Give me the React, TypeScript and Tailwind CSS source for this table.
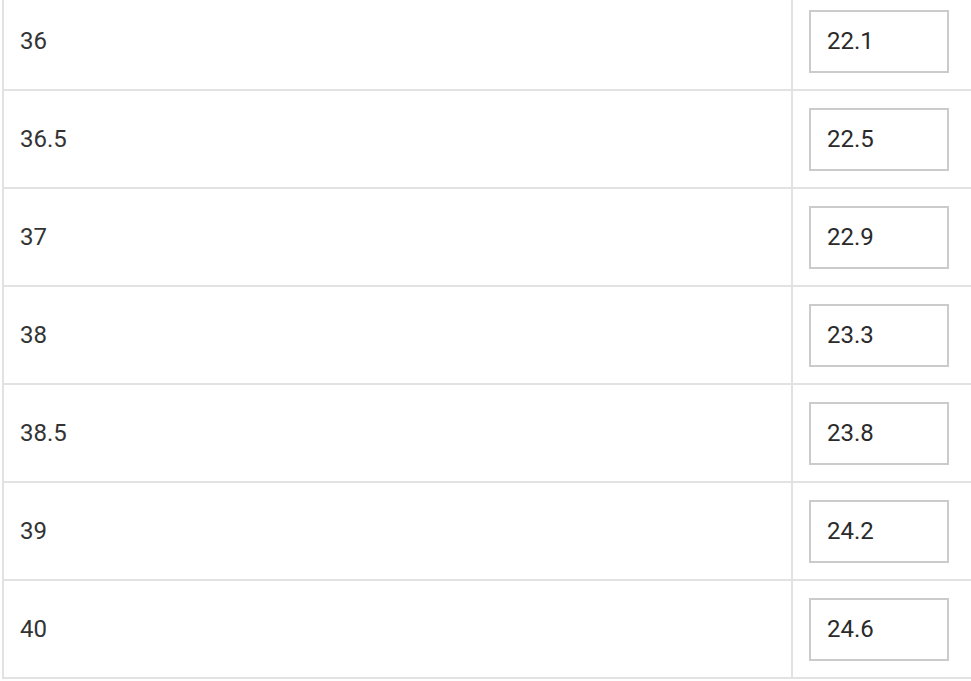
import React from 'react';

const ROWS = [
  { size: '36', value: '22.1' },
  { size: '36.5', value: '22.5' },
  { size: '37', value: '22.9' },
  { size: '38', value: '23.3' },
  { size: '38.5', value: '23.8' },
  { size: '39', value: '24.2' },
  { size: '40', value: '24.6' },
];

export default function App() {
  return (
    <div className="w-[971px] h-[681px] overflow-hidden bg-white font-['Roboto',sans-serif] text-[#333]">
      <div className="mt-[-7px] ml-[2px] w-[1000px] border-l-2 border-[#e2e2e2]">
        {ROWS.map((row) => (
          <div key={row.size} className="flex h-[98px] border-b-2 border-[#e2e2e2]">
            <div className="w-[787px] flex items-center pl-[16px] text-[24px]">{row.size}</div>
            <div className="flex-1 flex items-center pl-[16px] border-l-2 border-[#e2e2e2]">
              <div className="w-[140px] h-[63px] border-2 border-[#cbcbcb] flex items-center pl-[16px] text-[24px] text-[#2a2a2a]">
                {row.value}
              </div>
            </div>
          </div>
        ))}
      </div>
    </div>
  );
}
